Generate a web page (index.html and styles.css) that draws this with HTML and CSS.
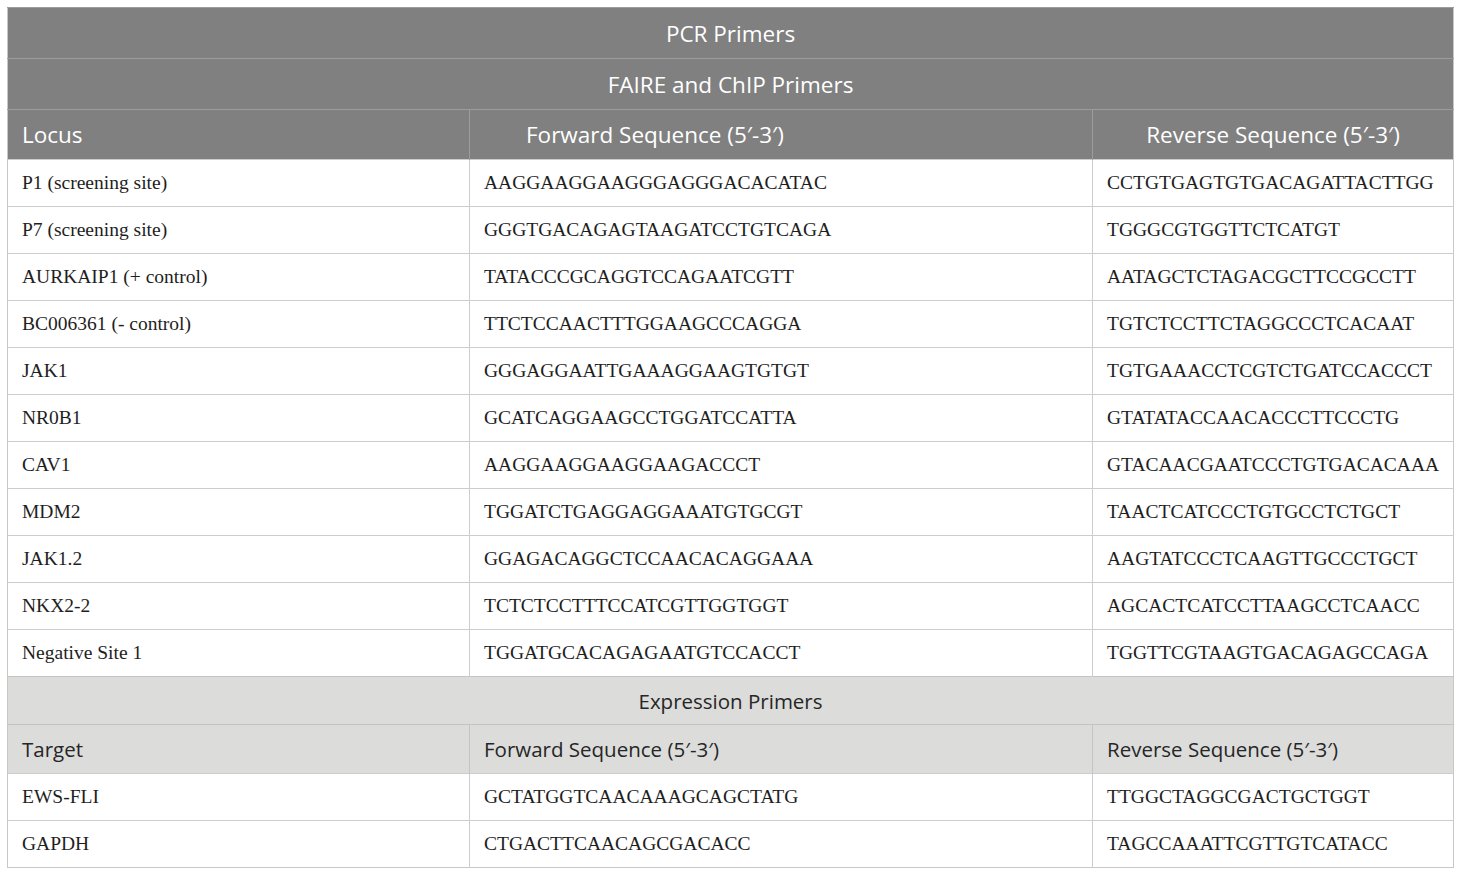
FILE: index.html
```html
<!DOCTYPE html>
<html>
<head>
<meta charset="utf-8">
<link rel="stylesheet" href="styles.css">
</head>
<body>
<table class="primers">
  <colgroup>
    <col class="c1"><col class="c2"><col class="c3">
  </colgroup>
  <thead>
    <tr class="title"><th colspan="3">PCR Primers</th></tr>
    <tr class="title"><th colspan="3">FAIRE and ChIP Primers</th></tr>
    <tr class="head"><th class="h-locus">Locus</th><th class="h-fwd">Forward Sequence (5′-3′)</th><th class="h-rev">Reverse Sequence (5′-3′)</th></tr>
  </thead>
  <tbody>
    <tr><td>P1 (screening site)</td><td>AAGGAAGGAAGGGAGGGACACATAC</td><td>CCTGTGAGTGTGACAGATTACTTGG</td></tr>
    <tr><td>P7 (screening site)</td><td>GGGTGACAGAGTAAGATCCTGTCAGA</td><td>TGGGCGTGGTTCTCATGT</td></tr>
    <tr><td>AURKAIP1 (+ control)</td><td>TATACCCGCAGGTCCAGAATCGTT</td><td>AATAGCTCTAGACGCTTCCGCCTT</td></tr>
    <tr><td>BC006361 (- control)</td><td>TTCTCCAACTTTGGAAGCCCAGGA</td><td>TGTCTCCTTCTAGGCCCTCACAAT</td></tr>
    <tr><td>JAK1</td><td>GGGAGGAATTGAAAGGAAGTGTGT</td><td>TGTGAAACCTCGTCTGATCCACCCT</td></tr>
    <tr><td>NR0B1</td><td>GCATCAGGAAGCCTGGATCCATTA</td><td>GTATATACCAACACCCTTCCCTG</td></tr>
    <tr><td>CAV1</td><td>AAGGAAGGAAGGAAGACCCT</td><td>GTACAACGAATCCCTGTGACACAAA</td></tr>
    <tr><td>MDM2</td><td>TGGATCTGAGGAGGAAATGTGCGT</td><td>TAACTCATCCCTGTGCCTCTGCT</td></tr>
    <tr><td>JAK1.2</td><td>GGAGACAGGCTCCAACACAGGAAA</td><td>AAGTATCCCTCAAGTTGCCCTGCT</td></tr>
    <tr><td>NKX2-2</td><td>TCTCTCCTTTCCATCGTTGGTGGT</td><td>AGCACTCATCCTTAAGCCTCAACC</td></tr>
    <tr><td>Negative Site 1</td><td>TGGATGCACAGAGAATGTCCACCT</td><td>TGGTTCGTAAGTGACAGAGCCAGA</td></tr>
    <tr class="subtitle"><th colspan="3">Expression Primers</th></tr>
    <tr class="subhead"><th>Target</th><th>Forward Sequence (5′-3′)</th><th>Reverse Sequence (5′-3′)</th></tr>
    <tr><td>EWS-FLI</td><td>GCTATGGTCAACAAAGCAGCTATG</td><td>TTGGCTAGGCGACTGCTGGT</td></tr>
    <tr><td>GAPDH</td><td>CTGACTTCAACAGCGACACC</td><td>TAGCCAAATTCGTTGTCATACC</td></tr>
  </tbody>
</table>
</body>
</html>
```

FILE: styles.css
```css
html, body {
  margin: 0;
  padding: 0;
  background: #ffffff;
}
body {
  padding: 7px;
}
.primers {
  border-collapse: collapse;
  table-layout: fixed;
  width: 1446px;
  border: 1px solid #c8c8c8;
}
.c1 { width: 462px; }
.c2 { width: 623px; }
.c3 { width: 361px; }

.primers th {
  font-family: "Open Sans", "Noto Sans", sans-serif;
  font-weight: normal;
  font-size: 22.5px;
  padding: 0 14px;
}
.primers td {
  font-family: "Liberation Serif", "Times New Roman", serif;
  font-size: 19.5px;
  color: #1e1e1e;
  height: 46px;
  padding: 0 14px;
  border-top: 1px solid #cdcdcd;
  border-left: 1px solid #cdcdcd;
  vertical-align: middle;
}
.primers td:first-child { border-left: none; }

.title th {
  background: #808080;
  color: #ffffff;
  height: 50px;
  text-align: center;
  border-top: 1px solid #9c9c9c;
}
.head th {
  background: #808080;
  color: #ffffff;
  height: 49px;
  text-align: left;
  border-top: 1px solid #9c9c9c;
  border-left: 1px solid #9c9c9c;
}
.head th.h-locus { border-left: none; }
.head th.h-fwd { padding-left: 56px; }
.head th.h-rev { text-align: center; }

.primers .subtitle th {
  background: #dcdcdb;
  color: #262626;
  font-size: 20.5px;
  height: 47px;
  text-align: center;
  border-top: 1px solid #c4c4c4;
}
.primers .subhead th {
  background: #dcdcdb;
  color: #262626;
  font-size: 20.5px;
  height: 48px;
  text-align: left;
  border-top: 1px solid #c4c4c4;
  border-left: 1px solid #c4c4c4;
}
.primers .subhead th:first-child { border-left: none; }
```
